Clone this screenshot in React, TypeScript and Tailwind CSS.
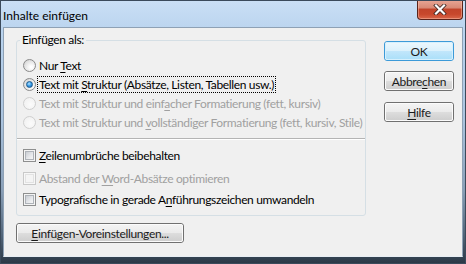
import React from "react";

const U = ({ children }: { children: React.ReactNode }) => (
  <span className="underline underline-offset-[2px] decoration-[1px]">{children}</span>
);

function Radio({ checked, disabled }: { checked?: boolean; disabled?: boolean }) {
  return (
    <span
      className={`w-[13px] h-[13px] rounded-full border flex items-center justify-center shrink-0 ${
        disabled
          ? "border-[#cfcfcf] bg-[radial-gradient(circle_at_60%_60%,#fbfbfb,#eeeeee)]"
          : "border-[#8a8a8a] bg-[radial-gradient(circle_at_65%_65%,#ffffff_10%,#e6e6e6_55%,#c9c9c9)]"
      }`}
    >
      {checked && (
        <span className="w-[7px] h-[7px] rounded-full border border-[#1d5a8c] bg-[radial-gradient(circle_at_40%_35%,#b6e3ff_0%,#3da0ea_45%,#0d5ca8_100%)]" />
      )}
    </span>
  );
}

function Check({ disabled }: { disabled?: boolean }) {
  return (
    <span
      className={`w-[13px] h-[13px] border p-[1px] shrink-0 ${
        disabled ? "border-[#c9c9c9] bg-[#f7f7f7]" : "border-[#8e8f8f] bg-[#f4f4f4]"
      }`}
    >
      <span
        className={`block w-full h-full border ${
          disabled
            ? "border-[#e2e2e2] bg-[#f4f4f4]"
            : "border-[#aeb3b9] bg-[linear-gradient(135deg,#c9cdd3_0%,#e7e9ec_60%,#f6f6f6_100%)]"
        }`}
      />
    </span>
  );
}

function Btn({
  children,
  def,
  className = "",
}: {
  children: React.ReactNode;
  def?: boolean;
  className?: string;
}) {
  return (
    <div
      className={`h-[20px] rounded-[3px] border ${
        def ? "border-[#3c9ad8]" : "border-[#707070]"
      } ${className}`}
    >
      <div
        className={`h-full rounded-[2px] border flex items-center justify-center text-[#1b1b1b] ${
          def
            ? "border-[#d6f0fd] bg-[linear-gradient(180deg,#ebf7fd_0%,#dbf1fc_48%,#c1e6fb_52%,#ace0f9_100%)]"
            : "border-[#fbfbfb] bg-[linear-gradient(180deg,#f3f3f3_0%,#ebebeb_48%,#dddddd_52%,#cfcfcf_100%)]"
        }`}
      >
        {children}
      </div>
    </div>
  );
}

export default function App() {
  return (
    <div className="w-[466px] h-[264px] overflow-hidden border border-[#3b4a5b] flex flex-col [font-family:Lato,sans-serif] text-[12px] leading-[15px] tracking-[-0.35px] whitespace-nowrap text-black bg-[linear-gradient(180deg,#cadff5_0%,#b9d3ee_12%,#abc4df_45%,#8aa0b8_72%,#4f6276_90%,#2c3947_100%)]">
      {/* title bar */}
      <div className="h-[26px] flex items-start shrink-0">
        <div className="pl-[2px] pt-[7px] flex-1 tracking-normal">Inhalte einfügen</div>
        <div className="-mt-[1px] mr-[2px] w-[46px] h-[20px] rounded-b-[4px] border border-[#5a231a] border-t-0 bg-[linear-gradient(180deg,#e9a796_0%,#d98a76_40%,#c2442a_50%,#c8482c_75%,#d9674a_100%)] flex items-center justify-center shadow-[inset_0_0_0_1px_rgba(255,200,180,0.45)]">
          <svg width="14" height="11" viewBox="0 0 14 11">
            <path d="M3 1.5 L11 9.5 M11 1.5 L3 9.5" stroke="#3a2420" strokeWidth="3.8" strokeLinecap="square" fill="none" />
            <path d="M3 1.5 L11 9.5 M11 1.5 L3 9.5" stroke="#ffffff" strokeWidth="2.2" strokeLinecap="square" fill="none" />
          </svg>
        </div>
      </div>

      {/* client area */}
      <div className="ml-[2px] mr-[2px] mb-[6px] flex-1 border border-[#8ea1b5] border-b-[#e8eef4] bg-[#f0f0f0] flex pl-[12px] pt-[4px]">
        {/* left column */}
        <div className="flex flex-col">
          <fieldset className="w-[350px] min-w-0 h-[184px] border border-[#d5dfe5] rounded-[3px]">
            <legend className="ml-[3px] px-[2px] leading-[16px]">Einfügen als:</legend>
            <div className="pt-[8px] pl-[6px] flex flex-col">
              <div className="h-[19px] flex items-center">
                <Radio />
                <span className="ml-[1px] border border-transparent px-[1px]">
                  Nur <U>T</U>ext
                </span>
              </div>
              <div className="h-[19px] flex items-center">
                <Radio checked />
                <span className="ml-[1px] border border-dotted border-black px-[1px]">
                  Text mit <U>S</U>truktur (Absätze, Listen, Tabellen usw.)
                </span>
              </div>
              <div className="h-[19px] flex items-center text-[#a0a0a0]">
                <Radio disabled />
                <span className="ml-[1px] border border-transparent px-[1px]">
                  Text mit Struktur und einf<U>a</U>cher Formatierung (fett, kursiv)
                </span>
              </div>
              <div className="h-[19px] flex items-center text-[#a0a0a0]">
                <Radio disabled />
                <span className="ml-[1px] border border-transparent px-[1px]">
                  Text mit Struktur und <U>v</U>ollständiger Formatierung (fett, kursiv, Stile)
                </span>
              </div>
            </div>
            <div className="mt-[6px] border-t border-[#b4b4b4] border-b border-b-white" />
            <div className="pl-[6px] flex flex-col">
              <div className="mt-[7px] h-[16px] flex items-center">
                <Check />
                <span className="ml-[3px]">
                  <U>Z</U>eilenumbrüche beibehalten
                </span>
              </div>
              <div className="mt-[7px] h-[16px] flex items-center text-[#a0a0a0]">
                <Check disabled />
                <span className="ml-[3px]">
                  Abstand der <U>W</U>ord-Absätze optimieren
                </span>
              </div>
              <div className="mt-[5px] h-[16px] flex items-center">
                <Check />
                <span className="ml-[3px]">
                  Typografische in gerade A<U>n</U>führungszeichen umwandeln
                </span>
              </div>
            </div>
          </fieldset>
          <Btn className="mt-[7px] w-[168px]">
            <span>
              <U>E</U>infügen-Voreinstellungen...
            </span>
          </Btn>
        </div>

        {/* right column */}
        <div className="ml-[18px] mt-[9px] flex flex-col">
          <Btn def className="w-[70px]">
            OK
          </Btn>
          <Btn className="w-[70px] mt-[10px]">
            <span>
              Abbre<U>c</U>hen
            </span>
          </Btn>
          <Btn className="w-[70px] mt-[11px]">
            <span>
              <U>H</U>ilfe
            </span>
          </Btn>
        </div>
      </div>
    </div>
  );
}
